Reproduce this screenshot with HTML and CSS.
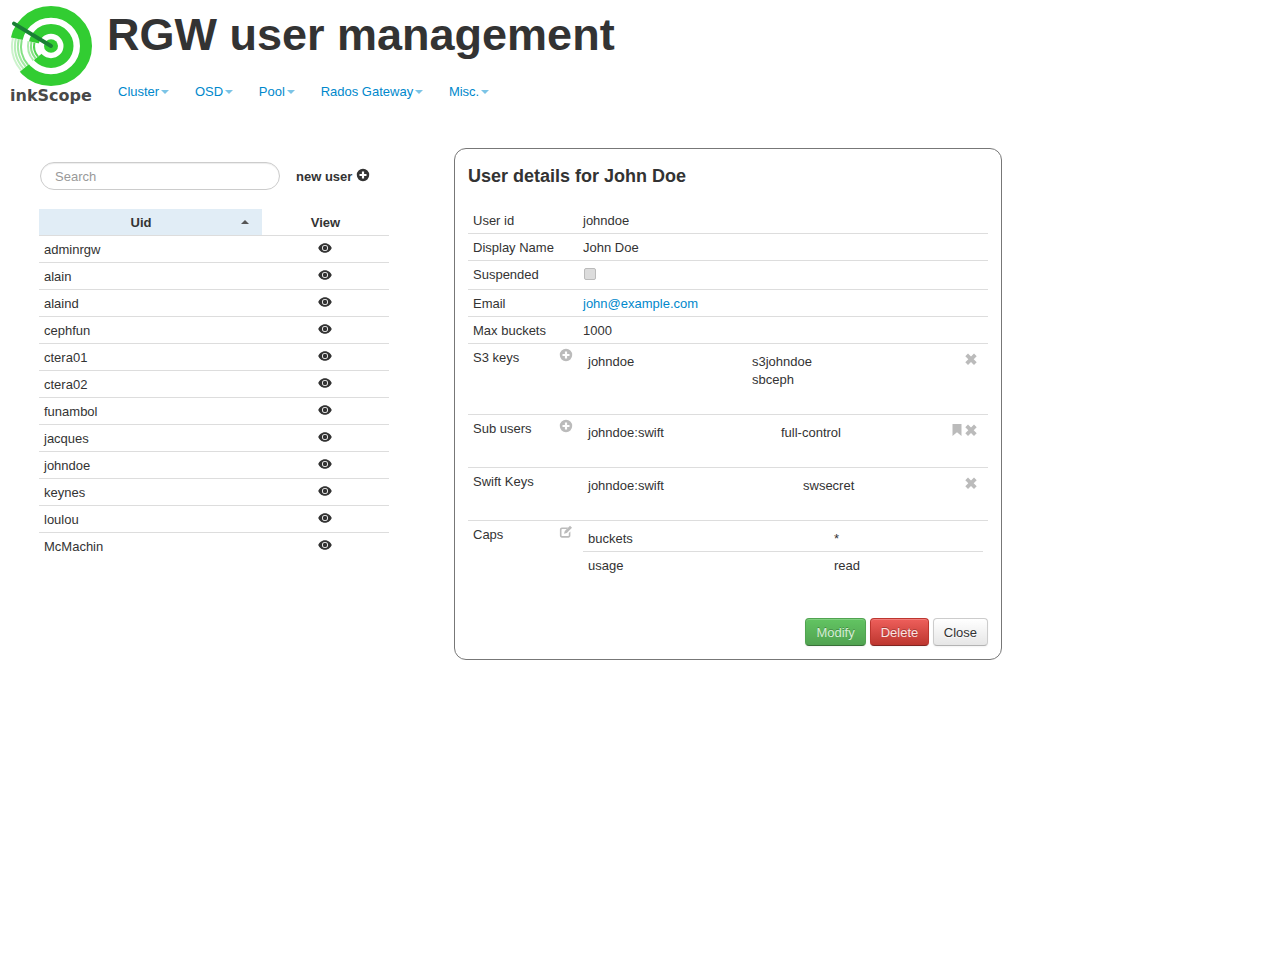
FILE: index.html
```html
<!DOCTYPE html>
<html>
<head>
  <meta charset="UTF-8">
  <title>RGW user management</title>
  <link rel="stylesheet" href="styles.css">
</head>
<body>
  <svg class="sprites" width="0" height="0">
    <symbol id="i-eye" viewBox="0 0 14 14"><path fill-rule="evenodd" d="M7 2.2C3.6 2.2 1.2 4.7.2 7c1 2.3 3.4 4.8 6.800 4.800s5.800-2.500 6.800-4.800C12.800 4.700 10.400 2.200 7 2.200zM7 4a3 3 0 1 1 0 6 3 3 0 0 1 0-6z"/><circle cx="7" cy="7" r="2.200"/></symbol>
    <symbol id="i-plus" viewBox="0 0 14 14"><path fill-rule="evenodd" d="M7 .8a6.200 6.200 0 1 1 0 12.400A6.200 6.200 0 0 1 7 .8zM5.900 3.500v2.400H3.500v2.200h2.400v2.400h2.200V8.100h2.400V5.900H8.100V3.500z"/></symbol>
    <symbol id="i-remove" viewBox="0 0 14 14"><path d="M4 1.600 7 4.600l3-3 2.700 2.700-3 3 3 3-2.700 2.700-3-3-3 3-2.700-2.700 3-3-3-3z"/></symbol>
    <symbol id="i-bookmark" viewBox="0 0 14 14"><path d="M2.500 1h9v12L7 9.200 2.500 13z"/></symbol>
    <symbol id="i-edit" viewBox="0 0 14 14"><path d="M2.800 2.500h6.400L7.700 4H3.500a.9.9 0 0 0-1 1v5.200c0 .5.400.9 1 .9h5.400c.5 0 .9-.4.9-.9V8l1.600-1.600v4.400c0 1.100-.9 1.900-1.900 1.900H2.800c-1 0-1.900-.8-1.900-1.900V4.400c0-1 .9-1.900 1.900-1.900z"/><path d="M11 .8 13 2.800 7.800 8 5 8.800 5.800 6z"/></symbol>
  </svg>

  <header class="top">
    <div class="logo">
      <svg width="82" height="80" viewBox="0 0 82 82" preserveAspectRatio="none">
        <circle cx="41" cy="41" r="35" fill="none" stroke="#32cd32" stroke-width="12"/>
        <circle cx="41" cy="41" r="17.500" fill="none" stroke="#32cd32" stroke-width="10"/>
        <path d="M41 41 0 32V60L8 69Z" fill="#fff"/>
        <g fill="none" stroke="#32cd32" stroke-width="2">
          <path d="M2.900 32.900A39 39 0 0 0 11.100 66.100" opacity=".25"/>
          <path d="M5.800 33.500A36 36 0 0 0 13.400 64.100" opacity=".35"/>
          <path d="M8.700 34.100A33 33 0 0 0 15.700 62.200" opacity=".45"/>
          <path d="M11.700 34.800A30 30 0 0 0 18 60.300" opacity=".6"/>
          <path d="M18.500 36.200A23 23 0 0 0 23.400 55.800" opacity=".4"/>
          <path d="M21.400 36.800A20 20 0 0 0 25.700 53.900" opacity=".6"/>
          <path d="M24.400 37.500A17 17 0 0 0 28 51.900" opacity=".85"/>
        </g>
        <circle cx="41" cy="41" r="7" fill="#32cd32"/>
        <path d="M4 18 41 41" stroke="#1a8035" stroke-width="4" stroke-linecap="round"/>
      </svg>
      <div class="logo-name">inkScope</div>
    </div>
    <div class="head-right">
      <h1>RGW user management</h1>
      <nav class="menu">
        <a href="#">Cluster<b class="caret"></b></a>
        <a href="#">OSD<b class="caret"></b></a>
        <a href="#">Pool<b class="caret"></b></a>
        <a href="#">Rados Gateway<b class="caret"></b></a>
        <a href="#">Misc.<b class="caret"></b></a>
      </nav>
    </div>
  </header>

  <div class="main">
    <section class="users">
      <div class="search-row">
        <input class="search" type="text" placeholder="Search">
        <span class="new-user">new user <svg class="icon"><use href="#i-plus"/></svg></span>
      </div>
      <table class="user-table">
        <thead>
          <tr>
            <th class="sorted">Uid<b class="sort-arrow"></b></th>
            <th>View</th>
          </tr>
        </thead>
        <tbody>
          <tr><td>adminrgw</td><td class="view"><svg class="icon"><use href="#i-eye"/></svg></td></tr>
          <tr><td>alain</td><td class="view"><svg class="icon"><use href="#i-eye"/></svg></td></tr>
          <tr><td>alaind</td><td class="view"><svg class="icon"><use href="#i-eye"/></svg></td></tr>
          <tr><td>cephfun</td><td class="view"><svg class="icon"><use href="#i-eye"/></svg></td></tr>
          <tr><td>ctera01</td><td class="view"><svg class="icon"><use href="#i-eye"/></svg></td></tr>
          <tr><td>ctera02</td><td class="view"><svg class="icon"><use href="#i-eye"/></svg></td></tr>
          <tr><td>funambol</td><td class="view"><svg class="icon"><use href="#i-eye"/></svg></td></tr>
          <tr><td>jacques</td><td class="view"><svg class="icon"><use href="#i-eye"/></svg></td></tr>
          <tr><td>johndoe</td><td class="view"><svg class="icon"><use href="#i-eye"/></svg></td></tr>
          <tr><td>keynes</td><td class="view"><svg class="icon"><use href="#i-eye"/></svg></td></tr>
          <tr><td>loulou</td><td class="view"><svg class="icon"><use href="#i-eye"/></svg></td></tr>
          <tr><td>McMachin</td><td class="view"><svg class="icon"><use href="#i-eye"/></svg></td></tr>
        </tbody>
      </table>
    </section>

    <section class="details">
      <h3>User details for John Doe</h3>
      <div class="rows">
        <div class="row first"><div class="label">User id</div><div class="value">johndoe</div></div>
        <div class="row h27"><div class="label">Display Name</div><div class="value">John Doe</div></div>
        <div class="row h29"><div class="label">Suspended</div><div class="value"><input class="check" type="checkbox" disabled></div></div>
        <div class="row h27"><div class="label">Email</div><div class="value"><a href="#">john@example.com</a></div></div>
        <div class="row h27"><div class="label">Max buckets</div><div class="value">1000</div></div>

        <div class="row h71">
          <div class="label">S3 keys<svg class="icon gray"><use href="#i-plus"/></svg></div>
          <div class="sub">
            <div class="sub-row">
              <span class="c1 w164">johndoe</span>
              <span class="c2">s3johndoe<br>sbceph</span>
              <span class="acts"><svg class="icon gray"><use href="#i-remove"/></svg></span>
            </div>
          </div>
        </div>

        <div class="row h53">
          <div class="label">Sub users<svg class="icon gray"><use href="#i-plus"/></svg></div>
          <div class="sub">
            <div class="sub-row">
              <span class="c1 w193">johndoe:swift</span>
              <span class="c2">full-control</span>
              <span class="acts"><svg class="icon gray"><use href="#i-bookmark"/></svg><svg class="icon gray"><use href="#i-remove"/></svg></span>
            </div>
          </div>
        </div>

        <div class="row h53">
          <div class="label">Swift Keys</div>
          <div class="sub">
            <div class="sub-row">
              <span class="c1 w215">johndoe:swift</span>
              <span class="c2">swsecret</span>
              <span class="acts"><svg class="icon gray"><use href="#i-remove"/></svg></span>
            </div>
          </div>
        </div>

        <div class="row caps">
          <div class="label">Caps<svg class="icon gray"><use href="#i-edit"/></svg></div>
          <div class="sub">
            <div class="cap-row"><span class="c1 w246">buckets</span><span class="c2">*</span></div>
            <div class="cap-row"><span class="c1 w246">usage</span><span class="c2">read</span></div>
          </div>
        </div>
      </div>
      <div class="buttons">
        <button class="btn btn-modify">Modify</button>
        <button class="btn btn-delete">Delete</button>
        <button class="btn">Close</button>
      </div>
    </section>
  </div>
</body>
</html>
```

FILE: styles.css
```css
body {
  margin: 0;
  font-family: "Liberation Sans", Arial, sans-serif;
  font-size: 13px;
  line-height: 20px;
  color: #333;
  background: #fff;
}
a {
  color: #0088cc;
  text-decoration: none;
}
.sprites {
  display: block;
}
.icon {
  display: inline-block;
  width: 14px;
  height: 14px;
  vertical-align: -1px;
  fill: #333;
}
.icon.gray {
  fill: #bbb;
}

/* header */
.top {
  display: flex;
  padding: 5px 0 0 10px;
  height: 107px;
  box-sizing: border-box;
}
.logo {
  width: 82px;
}
.logo svg {
  display: block;
  margin-top: 1px;
}
.logo-name {
  margin-top: 1px;
  font-family: "DejaVu Sans", sans-serif;
  font-weight: bold;
  font-size: 16px;
  line-height: 18px;
  color: #484848;
  white-space: nowrap;
}
.head-right {
  margin-left: 15px;
}
h1 {
  margin: 5px 0 0;
  font-size: 45px;
  line-height: 50px;
  font-weight: bold;
}
.menu {
  display: flex;
  gap: 25.75px;
  margin: 22px 0 0 11px;
}
.caret {
  display: inline-block;
  margin-left: 2px;
  vertical-align: 2px;
  border-top: 4px solid #7cc4e6;
  border-left: 4px solid transparent;
  border-right: 4px solid transparent;
}

/* main */
.main {
  display: flex;
  align-items: flex-start;
  padding: 41px 0 0 39px;
}
.users {
  width: 350px;
  margin-right: 65px;
}
.search-row {
  display: flex;
  align-items: center;
  padding: 14px 0 0 1px;
  height: 28px;
}
.search {
  width: 240px;
  height: 28px;
  box-sizing: border-box;
  padding: 0 14px;
  border: 1px solid #ccc;
  border-radius: 14px;
  font: inherit;
  color: #555;
  outline: none;
  box-shadow: inset 0 1px 1px rgba(0, 0, 0, .075);
}
.search::placeholder {
  color: #999;
}
.new-user {
  margin: 2px 0 0 16px;
  font-weight: bold;
  color: #333;
}
.user-table {
  width: 350px;
  margin-top: 19px;
  border-collapse: collapse;
  table-layout: fixed;
}
.user-table th {
  position: relative;
  height: 26px;
  padding: 3px 5px 0;
  box-sizing: border-box;
  font-weight: bold;
  text-align: center;
  border-bottom: 1px solid #ddd;
}
.user-table th:first-child {
  width: 223px;
  padding-right: 24px;
}
.user-table th.sorted {
  background: #e1edf6;
}
.sort-arrow {
  position: absolute;
  right: 13px;
  top: 11px;
  border-bottom: 4px solid #555;
  border-left: 4px solid transparent;
  border-right: 4px solid transparent;
}
.user-table td {
  height: 27px;
  padding: 3px 5px 0;
  box-sizing: border-box;
  border-bottom: 1px solid #ddd;
}
.user-table tr:last-child td {
  border-bottom: 0;
}
.user-table td.view {
  text-align: center;
  padding: 3px 7px 0 5px;
}

/* details panel */
.details {
  width: 520px;
  height: 510px;
  border: 1px solid #777;
  border-radius: 12px;
  padding: 0 13px;
  display: flex;
  flex-direction: column;
}
h3 {
  margin: 12px 0 17px;
  font-size: 18px;
  line-height: 30px;
  font-weight: bold;
}
.row {
  display: flex;
  border-bottom: 1px solid #ddd;
  box-sizing: border-box;
}
.row.caps {
  border-bottom: 0;
}
.first {
  height: 26px;
}
.h27 {
  height: 27px;
}
.h29 {
  height: 29px;
}
.h53 {
  height: 53px;
}
.h71 {
  height: 71px;
}
.label {
  display: flex;
  justify-content: space-between;
  width: 115px;
  box-sizing: border-box;
  padding: 4px 10px 0 5px;
}
.value {
  padding-top: 4px;
}
.first .label,
.first .value {
  padding-top: 3px;
}
.check {
  display: block;
  appearance: none;
  box-sizing: border-box;
  width: 12px;
  height: 12px;
  margin: 3px 0 0 1px;
  background: #dcdcdc;
  border: 1px solid #bbb;
  border-radius: 2px;
}
.sub {
  flex: 1;
  width: 400px;
  margin-right: 5px;
}
.sub-row {
  display: flex;
  padding: 8px 5px 0;
}
.c2 {
  line-height: 18px;
  padding-top: 1px;
}
.acts {
  margin-left: auto;
  display: flex;
  height: 14px;
}
.w164 {
  width: 164px;
}
.w193 {
  width: 193px;
}
.w215 {
  width: 215px;
}
.w246 {
  width: 246px;
}
.cap-row {
  display: flex;
  padding: 8px 5px 0;
  height: 27px;
  box-sizing: border-box;
}
.cap-row:first-child {
  height: 31px;
  border-bottom: 1px solid #ddd;
}
.cap-row:last-child {
  padding-top: 4px;
}
.buttons {
  margin-top: auto;
  padding-bottom: 13px;
  display: flex;
  justify-content: flex-end;
  gap: 4px;
}
.btn {
  height: 28px;
  padding: 1px 10px 0;
  font: inherit;
  color: #333;
  border: 1px solid #ccc;
  border-bottom-color: #b3b3b3;
  border-radius: 4px;
  background: linear-gradient(to bottom, #fff, #e6e6e6);
  text-shadow: 0 1px 1px rgba(255, 255, 255, .75);
  box-shadow: inset 0 1px 0 rgba(255, 255, 255, .2), 0 1px 2px rgba(0, 0, 0, .05);
}
.btn-modify {
  padding: 1px 10.5px 0;
  color: #d5efd5;
  border-color: #51a351 #51a351 #387038;
  background: linear-gradient(to bottom, #62c462, #51a351);
  text-shadow: 0 -1px 0 rgba(0, 0, 0, .25);
}
.btn-delete {
  padding: 1px 9.5px 0;
  color: #fbe3e2;
  border-color: #bd362f #bd362f #802420;
  background: linear-gradient(to bottom, #ee5f5b, #bd362f);
  text-shadow: 0 -1px 0 rgba(0, 0, 0, .25);
}
```
